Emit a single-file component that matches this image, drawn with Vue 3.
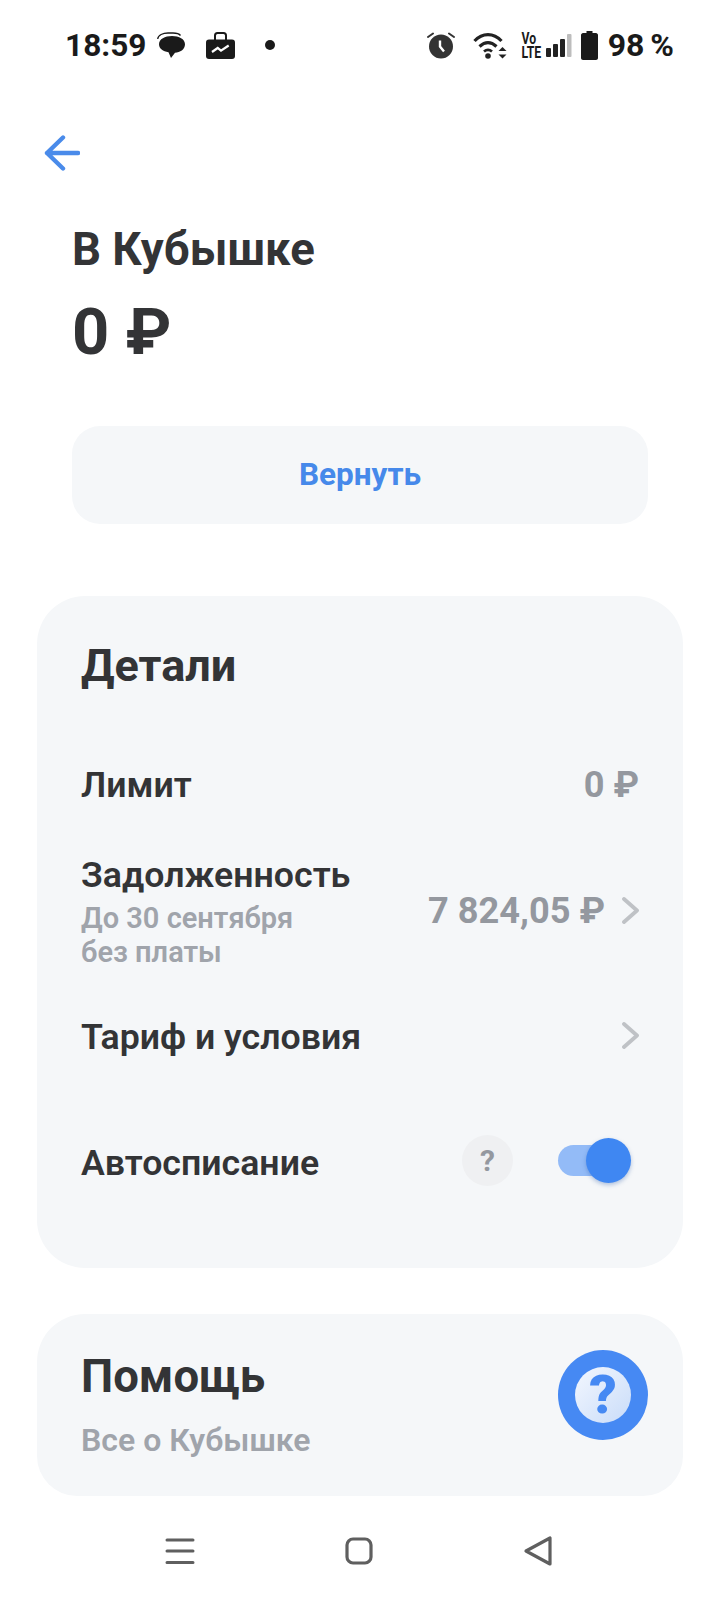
<template>
  <div class="screen">
    <header class="status-bar">
      <div class="status-left">
        <span class="time">18:59</span>
        <svg class="ic-chat" width="28" height="26" viewBox="0 0 28 26">
          <path d="M.7 7C1 3 6 1 11 1h5c3 0 6 .5 7.500 2.500" fill="none" stroke="#1a1a1a" stroke-width="1.300" />
          <path d="M15 4c7 0 13 3 13 8.300S23 20.500 18 20.800L14 26l-2.500-5.800C6 19.500 2 16.500 2 12.300 2 7 8 4 15 4z" fill="#1a1a1a" />
        </svg>
        <svg class="ic-work" width="29" height="27" viewBox="0 0 29 27">
          <path d="M9 8V3.500C9 2 10 1 11.500 1h6C19 1 20 2 20 3.500V8" fill="none" stroke="#1a1a1a" stroke-width="2" />
          <rect x="0" y="7.500" width="29" height="19.500" rx="3" fill="#1a1a1a" />
          <path d="M6 20l5.700-4 3.300 2.700 7.700-5.200" fill="none" stroke="#fff" stroke-width="2.200" />
        </svg>
        <span class="dot"></span>
      </div>
      <div class="status-right">
        <svg class="ic-alarm" width="28" height="27" viewBox="0 0 28 27">
          <circle cx="14" cy="14.500" r="12" fill="#333" />
          <path d="M1 5l5-3.500M27 5l-5-3.500" stroke="#333" stroke-width="2" stroke-linecap="round" />
          <path d="M13 8.500v6l4 5" fill="none" stroke="#fff" stroke-width="2.400" />
        </svg>
        <svg class="ic-wifi" width="34" height="27" viewBox="0 0 34 27">
          <path d="M1.500 9C9.500 .5 20.500 .5 28.500 9" fill="none" stroke="#222" stroke-width="3.200" />
          <path d="M6.500 14.500c5.500-5 11.500-5 17 0" fill="none" stroke="#222" stroke-width="3.200" />
          <path d="M11 19.500c2.800-2.300 5.200-2.300 8 0" fill="none" stroke="#222" stroke-width="2.800" />
          <circle cx="15" cy="24" r="2.800" fill="#222" />
          <path d="M29.500 15l4 4h-8zM29.500 26.500l4-4h-8z" fill="#222" />
        </svg>
        <div class="volte">Vo<br />LTE</div>
        <svg class="ic-signal" width="26" height="23" viewBox="0 0 26 23">
          <rect x="0" y="14" width="5" height="9" rx="1" fill="#222" />
          <rect x="7" y="10" width="5" height="13" rx="1" fill="#222" />
          <rect x="14" y="5" width="5" height="18" rx="1" fill="#222" />
          <rect x="21" y="0" width="4.500" height="23" rx="1" fill="#bdbdbd" />
        </svg>
        <svg class="ic-battery" width="17" height="29" viewBox="0 0 17 29">
          <path d="M5.500 0h6v2h3.500c1 0 2 1 2 2v23c0 1-1 2-2 2H2c-1 0-2-1-2-2V4c0-1 1-2 2-2h3.500z" fill="#1a1a1a" />
        </svg>
        <span class="percent">98 %</span>
      </div>
    </header>

    <button class="back" type="button" aria-label="Назад">
      <svg width="36" height="36" viewBox="0 0 36 36">
        <path d="M19 2.500L3 18l16 15.500M3 18h31" fill="none" stroke="#4a8bea" stroke-width="4.400" stroke-linecap="round" stroke-linejoin="round" />
      </svg>
    </button>

    <section class="summary">
      <h1>В Кубышке</h1>
      <div class="amount">0 ₽</div>
      <button class="return" type="button">Вернуть</button>
    </section>

    <section class="card details">
      <h2>Детали</h2>
      <div class="row limit">
        <span class="label">Лимит</span>
        <span class="value">0 ₽</span>
      </div>
      <div class="row debt">
        <div>
          <div class="label">Задолженность</div>
          <div class="sub">До 30 сентября<br />без платы</div>
        </div>
        <div class="right debt-value">
          <span class="value">7 824,05 ₽</span>
          <svg class="chevron" width="17" height="27" viewBox="0 0 17 27">
            <path d="M2 2l13 11.500L2 25" fill="none" stroke="#bfc2c6" stroke-width="3.800" stroke-linecap="round" stroke-linejoin="round" />
          </svg>
        </div>
      </div>
      <div class="row tariff">
        <span class="label">Тариф и условия</span>
        <svg class="chevron lifted" width="17" height="27" viewBox="0 0 17 27">
          <path d="M2 2l13 11.500L2 25" fill="none" stroke="#bfc2c6" stroke-width="3.800" stroke-linecap="round" stroke-linejoin="round" />
        </svg>
      </div>
      <div class="row auto">
        <span class="label">Автосписание</span>
        <div class="right">
          <span class="hint">?</span>
          <span class="toggle"><span class="knob"></span></span>
        </div>
      </div>
    </section>

    <section class="card help">
      <div>
        <h2>Помощь</h2>
        <div class="about">Все о Кубышке</div>
      </div>
      <div class="help-badge">
        <span class="help-inner">?</span>
      </div>
    </section>

    <nav class="nav-bar">
      <svg width="30" height="28" viewBox="0 0 30 28">
        <path d="M2 3h26M2 14h26M2 25.500h26" stroke="#5f5f5f" stroke-width="3" stroke-linecap="round" />
      </svg>
      <svg width="28" height="28" viewBox="0 0 28 28">
        <rect x="2" y="2" width="24" height="24" rx="6" fill="none" stroke="#5f5f5f" stroke-width="3.200" />
      </svg>
      <svg width="30" height="32" viewBox="0 0 30 32">
        <path d="M27 3v26L3 16z" fill="none" stroke="#5f5f5f" stroke-width="3.200" stroke-linejoin="round" />
      </svg>
    </nav>
  </div>
</template>

<script setup>
</script>

<style>
body {
  margin: 0;
  background: #fff;
}
</style>

<style scoped>
.screen {
  width: 720px;
  height: 1604px;
  overflow: hidden;
  position: relative;
  background: #fff;
  color: #333436;
  font-family: Roboto, "Liberation Sans", sans-serif;
}

.status-bar {
  height: 90px;
  padding: 0 46px 0 65px;
  box-sizing: border-box;
  display: flex;
  justify-content: space-between;
  align-items: center;
  color: #1a1a1a;
}

.status-left,
.status-right {
  display: flex;
  align-items: center;
}

.time {
  font-size: 31.600px;
  font-weight: 700;
}

.percent {
  margin-left: 10px;
  font-size: 32px;
  font-weight: 700;
  word-spacing: -2px;
}

.ic-chat {
  margin-left: 11px;
}

.ic-work {
  margin-left: 21px;
}

.dot {
  width: 10px;
  height: 10px;
  border-radius: 50%;
  background: #1a1a1a;
  margin-left: 30px;
}

.ic-wifi {
  margin-left: 18px;
}

.volte {
  width: 18px;
  margin-left: 12px;
  font-size: 17px;
  line-height: 14px;
  font-weight: 700;
  text-align: center;
  transform: scaleX(0.72);
}

.ic-signal {
  margin-left: 9px;
}

.ic-battery {
  margin-left: 9px;
}

.back {
  display: block;
  border: 0;
  background: none;
  padding: 0;
  margin: 45px 0 0 44px;
  height: 36px;
}

.summary {
  padding: 0 72px;
}

h1 {
  margin: 51px 0 0;
  font-size: 45.500px;
  line-height: 56px;
  font-weight: 700;
}

.amount {
  margin-top: 19px;
  font-size: 65px;
  line-height: 70px;
  font-weight: 700;
}

.return {
  display: block;
  width: 100%;
  height: 98px;
  margin-top: 59px;
  padding: 0 0 2px;
  border: 0;
  border-radius: 28px;
  background: #f5f7f9;
  color: #4689ea;
  font-family: inherit;
  font-size: 31.500px;
  font-weight: 700;
}

.card {
  margin: 0 37px;
  background: #f5f7f9;
  box-sizing: border-box;
  padding: 0 44px;
}

.details {
  margin-top: 72px;
  height: 672px;
  border-radius: 48px;
  padding-top: 43px;
}

h2 {
  margin: 0;
  font-size: 45px;
  line-height: 54px;
  font-weight: 700;
}

.row {
  display: flex;
  justify-content: space-between;
  align-items: center;
}

.label {
  font-size: 35.700px;
  line-height: 42px;
  font-weight: 600;
}

.value {
  font-size: 36.200px;
  font-weight: 700;
  color: #94989f;
}

.limit {
  margin-top: 70px;
}

.debt {
  margin-top: 48px;
}

.debt-value {
  margin-top: -2px;
}

.sub {
  margin-top: 6px;
  font-size: 29px;
  line-height: 33.500px;
  font-weight: 600;
  color: #a0a4ab;
}

.right {
  display: flex;
  align-items: center;
}

.chevron {
  margin-left: 17px;
}

.lifted {
  margin-top: -4px;
}

.tariff {
  margin-top: 47px;
}

.auto {
  margin-top: 81px;
}

.auto .right {
  margin-top: -4px;
}

.hint {
  width: 51px;
  height: 51px;
  border-radius: 50%;
  background: #eff0f2;
  color: #94989f;
  font-size: 30px;
  font-weight: 700;
  display: flex;
  align-items: center;
  justify-content: center;
}

.toggle {
  position: relative;
  width: 60px;
  height: 31px;
  margin: 0 21px 0 45px;
  border-radius: 16px;
  background: #93bbf7;
}

.knob {
  position: absolute;
  right: -13px;
  top: -7px;
  width: 45px;
  height: 45px;
  border-radius: 50%;
  background: #3f87f2;
  box-shadow: 0 2px 4px rgba(40, 90, 170, 0.35);
}

.help {
  margin-top: 46px;
  height: 182px;
  border-radius: 48px 48px 40px 40px;
  display: flex;
  justify-content: space-between;
  align-items: flex-start;
  padding-top: 36px;
  padding-right: 35px;
}

.help h2 {
  font-size: 45.500px;
}

.about {
  margin-top: 16px;
  font-size: 32px;
  line-height: 40px;
  font-weight: 600;
  color: #a0a4ab;
}

.help-badge {
  width: 90px;
  height: 90px;
  border-radius: 50%;
  background: #4689f3;
  display: flex;
  align-items: center;
  justify-content: center;
}

.help-inner {
  width: 56px;
  height: 56px;
  border-radius: 50%;
  background: linear-gradient(135deg, #f3f7fe, #c9dcf9);
  color: #4689f3;
  font-size: 54px;
  font-weight: 900;
  line-height: 56px;
  text-align: center;
}

.nav-bar {
  position: absolute;
  left: 165px;
  right: 167px;
  top: 1535px;
  display: flex;
  justify-content: space-between;
  align-items: center;
}
</style>
